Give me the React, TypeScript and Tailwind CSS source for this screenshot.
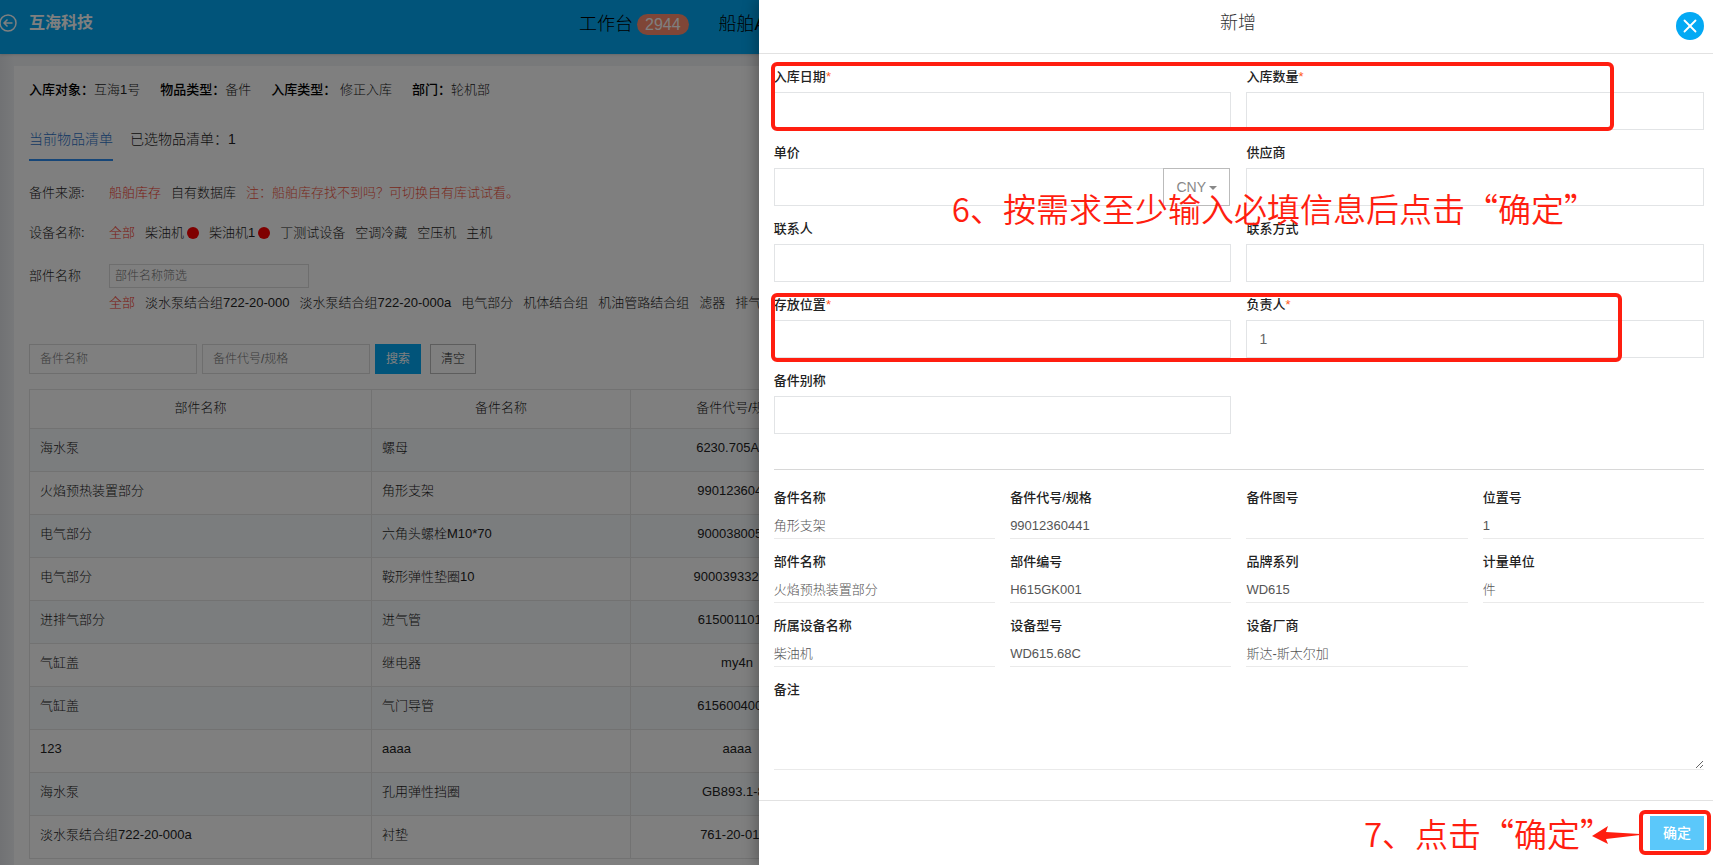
import { ReactNode } from 'react';
import { X } from 'lucide-react';

// --- Types ---
interface PartRow {
  component: string;
  name: string;
  code: string;
}

interface Detail {
  label: string;
  value: string;
}

// --- Data ---
const summary: Detail[] = [
  { label: '入库对象：', value: '互海1号' },
  { label: '物品类型：', value: '备件' },
  { label: '入库类型：', value: ' 修正入库' },
  { label: '部门：', value: '轮机部' },
];

const devices = [
  { name: '柴油机', alert: true },
  { name: '柴油机1', alert: true },
  { name: '丁测试设备', alert: false },
  { name: '空调冷藏', alert: false },
  { name: '空压机', alert: false },
  { name: '主机', alert: false },
];

const components = ['淡水泵结合组722-20-000', '淡水泵结合组722-20-000a', '电气部分', '机体结合组', '机油管路结合组', '滤器', '排气'];

const rows: PartRow[] = [
  { component: '海水泵', name: '螺母', code: '6230.705A-80' },
  { component: '火焰预热装置部分', name: '角形支架', code: '99012360441' },
  { component: '电气部分', name: '六角头螺栓M10*70', code: '90003800541' },
  { component: '电气部分', name: '鞍形弹性垫圈10', code: '900039332010' },
  { component: '进排气部分', name: '进气管', code: '61500110124' },
  { component: '气缸盖', name: '继电器', code: 'my4n' },
  { component: '气缸盖', name: '气门导管', code: '61560040032' },
  { component: '123', name: 'aaaa', code: 'aaaa' },
  { component: '海水泵', name: '孔用弹性挡圈', code: 'GB893.1-86' },
  { component: '淡水泵结合组722-20-000a', name: '衬垫', code: '761-20-0101' },
];

const details: Detail[] = [
  { label: '备件名称', value: '角形支架' },
  { label: '备件代号/规格', value: '99012360441' },
  { label: '备件图号', value: '' },
  { label: '位置号', value: '1' },
  { label: '部件名称', value: '火焰预热装置部分' },
  { label: '部件编号', value: 'H615GK001' },
  { label: '品牌系列', value: 'WD615' },
  { label: '计量单位', value: '件' },
  { label: '所属设备名称', value: '柴油机' },
  { label: '设备型号', value: 'WD615.68C' },
  { label: '设备厂商', value: '斯达-斯太尔加' },
];

export default function App() {
  return (
    <div
      lang="zh-CN"
      className="relative h-screen overflow-hidden bg-[#f0f2f5] font-['Liberation_Sans','Noto_Sans_CJK_SC',sans-serif] text-[13px] leading-5 text-black"
    >
      <StockPage />
      <div className="absolute inset-0 bg-black/50" />
      <AddDrawer />
    </div>
  );
}

function StockPage() {
  return (
    <div>
      <header className="relative flex h-[54px] items-center bg-[#03a9f4] pb-2 shadow-sm">
        <a href="#back" aria-label="返回" className="-ml-px block">
          <svg width="18" height="18" viewBox="0 0 18 18" fill="none" stroke="#fff" strokeWidth="1.5">
            <circle cx="9" cy="9" r="8" />
            <path d="M13.5 9H5M8.500 5.500L5 9l3.500 3.500" />
          </svg>
        </a>
        <span className="ml-3 text-base font-bold text-white">互海科技</span>
        <nav className="absolute left-[579px] flex items-center gap-[30px] pt-0.5 text-lg font-light whitespace-nowrap">
          <a href="#workbench" className="flex items-center gap-1">
            工作台
            <span className="rounded-full bg-[#ff8c6e] px-2 text-base leading-[21px] font-medium text-white">2944</span>
          </a>
          <a href="#ship">船舶A</a>
        </nav>
      </header>

      <main className="bg-linear-to-r from-[#e2e4e8] to-[#f0f2f5] to-[14px] px-3.5 pt-3">
        <div className="bg-white px-[15px] pt-3.5 pb-10 font-light text-[#222]">
          <div className="flex gap-5">
            {summary.map((s) => (
              <span key={s.label} className="whitespace-pre">
                <b className="font-medium text-black">{s.label}</b>
                {s.value}
              </span>
            ))}
          </div>

          <div className="mt-[29px] flex gap-[17px] text-sm">
            <a href="#current" className="border-b-2 border-[#2d8cf0] pb-2.5 leading-5 text-[#2d73c8]">当前物品清单</a>
            <a href="#selected" className="leading-5">已选物品清单：1</a>
          </div>

          <div className="mt-[22px] flex">
            <span className="w-20">备件来源:</span>
            <div className="flex gap-2.5">
              <a href="#ship-stock" className="text-[#f53a2d]">船舶库存</a>
              <a href="#own-stock">自有数据库</a>
              <span className="text-[#f2543f]">注：船舶库存找不到吗？可切换自有库试试看。</span>
            </div>
          </div>

          <div className="mt-5 flex">
            <span className="w-20">设备名称:</span>
            <div className="flex gap-2.5">
              <a href="#all-devices" className="text-[#f53a2d]">全部</a>
              {devices.map((d) => (
                <a key={d.name} href="#device" className="flex items-center gap-[3px]">
                  {d.name}
                  {d.alert && <i className="size-3 rounded-full bg-[#ff0000]" />}
                </a>
              ))}
            </div>
          </div>

          <div className="mt-[21px] flex">
            <label htmlFor="component-filter" className="w-20 leading-6">部件名称</label>
            <div className="min-w-0 flex-1">
              <input
                id="component-filter"
                placeholder="部件名称筛选"
                className="block h-6 w-[200px] border border-[#ddd] px-[5px] text-xs placeholder:text-[#777]"
              />
              <div className="mt-[5px] flex gap-2.5 overflow-hidden whitespace-nowrap">
                <a href="#all-components" className="text-[#f53a2d]">全部</a>
                {components.map((c) => (
                  <a key={c} href="#component">{c}</a>
                ))}
              </div>
            </div>
          </div>

          <form className="mt-[31px] flex gap-[5px] text-xs">
            <input aria-label="备件名称" placeholder="备件名称" className="h-[30px] w-[168px] border border-[#ddd] px-2.5 placeholder:text-[#777]" />
            <input aria-label="备件代号/规格" placeholder="备件代号/规格" className="h-[30px] w-[168px] border border-[#ddd] px-2.5 placeholder:text-[#777]" />
            <button type="button" className="h-[30px] w-[46px] bg-[#03a9f4] font-normal text-white">搜索</button>
            <button type="button" className="ml-1 h-[30px] w-[46px] border border-[#bbb]">清空</button>
          </form>

          <table className="mt-[15px] w-[815px] table-fixed border-collapse">
            <thead>
              <tr className="h-[39px]">
                <th className="w-[342px] border border-[#e4e4e4] pb-0.5 font-light">部件名称</th>
                <th className="w-[259px] border border-[#e4e4e4] pb-0.5 font-light">备件名称</th>
                <th className="border border-[#e4e4e4] pb-0.5 font-light">备件代号/规格</th>
              </tr>
            </thead>
            <tbody>
              {rows.map((r) => (
                <tr key={r.code} className="h-[43px] odd:bg-[#f7fafc]">
                  <td className="border border-[#e4e4e4] px-2.5 pb-1">{r.component}</td>
                  <td className="border border-[#e4e4e4] px-2.5 pb-1">{r.name}</td>
                  <td className="border border-[#e4e4e4] px-2.5 pb-1 text-center">{r.code}</td>
                </tr>
              ))}
            </tbody>
          </table>
        </div>
      </main>
    </div>
  );
}

interface FieldProps {
  id: string;
  label: string;
  required?: boolean;
  value?: string;
  children?: ReactNode;
}

function Field({ id, label, required, value, children }: FieldProps) {
  return (
    <div>
      <label htmlFor={id} className="mb-[5px] block font-medium text-[#222]">
        {label}
        {required && <span className="font-normal text-[#ff5722]">*</span>}
      </label>
      {children ?? (
        <input id={id} defaultValue={value} className="block h-[38px] w-full border border-[#e2e4e6] px-3 text-sm text-[#666]" />
      )}
    </div>
  );
}

function AddDrawer() {
  return (
    <aside className="absolute inset-y-0 right-0 flex w-[55.7%] flex-col bg-white shadow-[-4px_0_12px_rgba(0,0,0,0.25)]">
      <header className="relative flex h-[54px] shrink-0 justify-center border-b border-[#e2e2e2] pt-[9px] pl-1">
        <h2 className="text-lg leading-7 font-light text-[#333]">新增</h2>
        <button type="button" aria-label="关闭" className="absolute top-3 right-[9px] flex size-7 items-center justify-center rounded-full bg-[#03a9f4] text-white">
          <X size={22} strokeWidth={2} />
        </button>
      </header>

      <div className="flex-1 overflow-hidden pt-[13px] pr-[9px] pl-[15px]">
        <div className="grid grid-cols-2 gap-x-[15px] gap-y-[13px]">
          <Field id="date" label="入库日期" required />
          <Field id="amount" label="入库数量" required />
          <Field id="price" label="单价">
            <div className="flex pr-px">
              <input id="price" className="block h-[38px] min-w-0 flex-1 border border-r-0 border-[#e2e4e6] px-3 text-sm" />
              <div className="relative">
                <select aria-label="币种" className="block h-[38px] w-[67px] appearance-none border border-[#bbb] bg-white pl-3 text-sm text-[#888]">
                  <option>CNY</option>
                </select>
                <svg className="pointer-events-none absolute top-[18px] right-[13px]" width="8" height="4" viewBox="0 0 8 4" fill="#888">
                  <path d="M0 0h8L4 4z" />
                </svg>
              </div>
            </div>
          </Field>
          <Field id="supplier" label="供应商" />
          <Field id="contact" label="联系人" />
          <Field id="phone" label="联系方式" />
          <Field id="location" label="存放位置" required />
          <Field id="owner" label="负责人" required value="1" />
          <Field id="alias" label="备件别称" />
        </div>

        <hr className="mt-[35px] border-[#d8d8d8]" />

        <dl className="mt-[18px] grid grid-cols-4 gap-x-[15px] gap-y-[13px]">
          {details.map((d) => (
            <div key={d.label}>
              <dt className="font-medium text-[#222]">{d.label}</dt>
              <dd className="mt-[5px] h-[26px] border-b border-[#eaeaea] leading-[26px] font-light text-[#555]">{d.value}</dd>
            </div>
          ))}
        </dl>

        <label htmlFor="remark" className="mt-[13px] block font-medium text-[#222]">备注</label>
        <textarea id="remark" className="mt-[5px] block h-[65px] w-full resize-y border-b border-[#eaeaea]" />
      </div>

      <footer className="flex h-[65px] shrink-0 items-start justify-end border-t border-[#e2e2e2] pt-[15px] pr-[9px]">
        <button type="button" className="h-[34px] w-[54px] bg-[#5bc8fa] text-sm font-medium text-white">确定</button>
      </footer>

      <Annotations />
    </aside>
  );
}

/* Tutorial marks drawn over the form */
function Annotations() {
  return (
    <div className="pointer-events-none absolute inset-0 font-['Noto_Sans_CJK_SC',sans-serif] text-[33px] leading-10 font-[350] whitespace-nowrap text-[#ff1e10]">
      <div className="absolute top-[62px] left-3 h-[69px] w-[843px] rounded-md border-4 border-[#ff1e10]" />
      <div className="absolute top-[293px] left-3 h-[69px] w-[851px] rounded-md border-4 border-[#ff1e10]" />
      <p className="absolute top-[188px] left-[193px]">6、按需求至少输入必填信息后点击“确定”</p>
      <p className="absolute right-[100px] bottom-3">7、点击“确定”</p>
      <svg className="absolute right-[73px] bottom-[21px]" width="48" height="18" viewBox="0 0 48 18" fill="#ff1e10">
        <path d="M0 10L16 0L14 6L48 8V9L14 13L16 18Z" />
      </svg>
      <div className="absolute right-0.5 bottom-2.5 h-[45px] w-[72px] rounded-md border-4 border-[#ff1e10]" />
    </div>
  );
}
